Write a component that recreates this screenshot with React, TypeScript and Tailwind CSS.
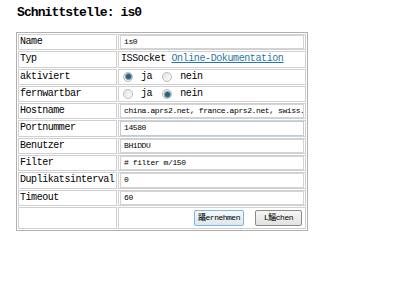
const mono = { fontFamily: '"Liberation Mono", "Noto Sans CJK SC", monospace' };

function Radio({ checked }: { checked?: boolean }) {
  return (
    <span className="inline-flex h-[10px] w-[10px] items-center justify-center rounded-full border border-[#bcbcbc] bg-gradient-to-br from-[#e4e4e4] to-[#fbfbfb]">
      {checked && <span className="h-[5px] w-[5px] rounded-full bg-[#2f5f78] ring-1 ring-[#7aa4bd]" />}
    </span>
  );
}

function RadioPair({ yes }: { yes: boolean }) {
  return (
    <div className="flex h-[14.3px] items-center pl-[3px] text-[10px] tracking-[-0.4px]">
      <Radio checked={yes} />
      <span className="ml-[8px]">ja</span>
      <span className="ml-[10px] flex"><Radio checked={!yes} /></span>
      <span className="ml-[8px]">nein</span>
    </div>
  );
}

function Field({ value, blue }: { value: string; blue?: boolean }) {
  return (
    <div
      className={
        "h-[14.3px] overflow-hidden whitespace-nowrap border bg-white pl-[3px] text-[8px] leading-[12px] tracking-[-0.4px] " +
        (blue ? "border-[#b8cfe0]" : "border-[#d4d4d4]")
      }
    >
      {value}
    </div>
  );
}

const rows: { label: string; kind: string; value?: string; yes?: boolean; blue?: boolean }[] = [
  { label: "Name", kind: "field", value: "is0" },
  { label: "Typ", kind: "typ" },
  { label: "aktiviert", kind: "radio", yes: true },
  { label: "fernwartbar", kind: "radio", yes: false },
  { label: "Hostname", kind: "field", value: "china.aprs2.net, france.aprs2.net, swiss.aprs2.net" },
  { label: "Portnummer", kind: "field", value: "14580", blue: true },
  { label: "Benutzer", kind: "field", value: "BH1DDU" },
  { label: "Filter", kind: "field", value: "# filter m/150" },
  { label: "Duplikatsinterval", kind: "field", value: "0" },
  { label: "Timeout", kind: "field", value: "60" },
];

export default function App() {
  return (
    <div className="h-[300px] w-[400px] overflow-hidden bg-white text-black" style={mono}>
      <h1 className="pl-[17px] pt-[5px] text-[13px] font-bold leading-[15px] tracking-[-0.9px]">Schnittstelle: is0</h1>
      <table className="ml-[16px] mt-[12px] w-[292px] table-fixed border-separate border-spacing-[1px] border border-[#b0b0b0]">
        <tbody>
          {rows.map((r) => (
            <tr key={r.label}>
              <td className="w-[99px] overflow-hidden whitespace-nowrap border border-[#d0d0d0] px-[1px] py-0 text-[10px] leading-[14.3px] tracking-[-0.45px]">
                {r.label}
              </td>
              <td className="overflow-hidden border border-[#d0d0d0] px-[1px] py-0 text-[10px] leading-[14.3px]">
                {r.kind === "field" && <Field value={r.value!} blue={r.blue} />}
                {r.kind === "typ" && (
                  <div className="whitespace-nowrap pl-[1px] tracking-[-0.4px]">
                    ISSocket <span className="text-[#2a76a8] underline">Online-Dokumentation</span>
                  </div>
                )}
                {r.kind === "radio" && <RadioPair yes={r.yes!} />}
              </td>
            </tr>
          ))}
          <tr>
            <td className="h-[22px] border border-[#d0d0d0]" />
            <td className="border border-[#d0d0d0] px-[1px] py-0">
              <div className="flex justify-end gap-[11px] pr-[2px] text-[8px] tracking-[-0.5px]">
                <button className="h-[16px] w-[50px] whitespace-nowrap rounded-[2px] border border-[#7fb3e0] bg-gradient-to-b from-[#f4f8fb] to-[#dfe7ee] leading-[14px]">
                  躡ernehmen
                </button>
                <button className="h-[16px] w-[47px] whitespace-nowrap rounded-[2px] border border-[#8a8a8a] bg-gradient-to-b from-[#f6f6f6] to-[#e2e2e2] leading-[14px]">
                  L鰏chen
                </button>
              </div>
            </td>
          </tr>
        </tbody>
      </table>
    </div>
  );
}
